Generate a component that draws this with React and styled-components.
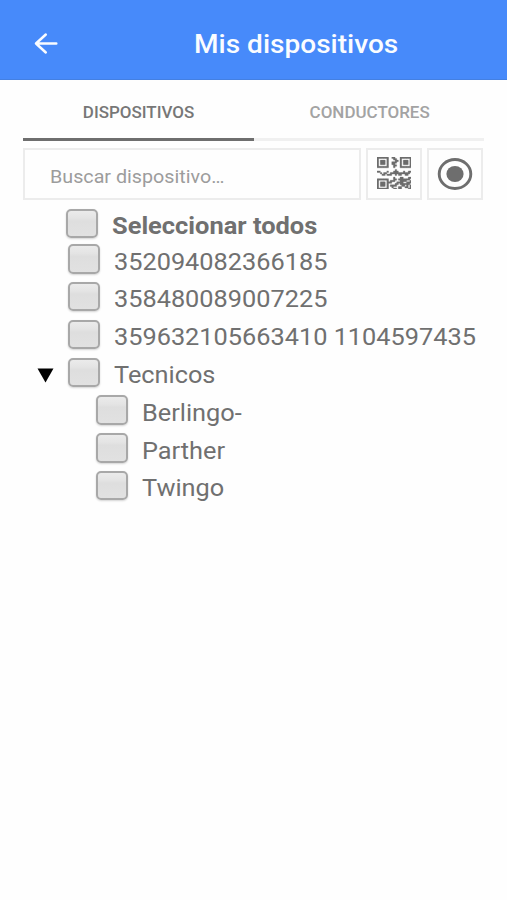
import React from "react";
import styled, { createGlobalStyle } from "styled-components";

const GlobalStyle = createGlobalStyle`
  * { box-sizing: border-box; }
  body { margin: 0; background: #fefefe; font-family: Roboto, "Liberation Sans", sans-serif; }
`;

const Screen = styled.main`
  width: 507px;
  height: 900px;
  overflow: hidden;
  background: #fefefe;
  color: #707070;
`;

const Header = styled.header`
  height: 80px;
  padding: 8px 34px 0;
  display: grid;
  grid-template-columns: 24px 1fr 24px;
  align-items: center;
  background: #478afa;
  border-bottom: 1px solid #4480e2;
  color: #fafcff;
`;

const IconButton = styled.button`
  display: flex;
  padding: 0;
  border: 0;
  background: none;
  color: inherit;
`;

const Title = styled.h1`
  margin: 0;
  padding: 1px 0 0 135.5px;
  font-size: 25.5px;
  line-height: 32px;
  font-weight: 500;
  white-space: nowrap;
`;

const Stretch = styled.span`
  display: inline-block;
  white-space: pre;
  transform: scaleX(${(p) => p.$x || 1.06});
  transform-origin: ${(p) => p.$origin || "left"} center;
`;

const Tabs = styled.nav`
  display: grid;
  grid-template-columns: 231px 230px;
  height: 61px;
  margin: 0 23px 7px;
`;

const Tab = styled.button`
  padding: 8px 0 0 1px;
  border: 0;
  border-bottom: 3px solid ${(p) => (p.$active ? "#6e6e6e" : "#f0f0f0")};
  background: none;
  color: ${(p) => (p.$active ? "#777777" : "#a3a3a3")};
  font: 500 16px/20px Roboto, sans-serif;
`;

const SearchRow = styled.div`
  display: grid;
  grid-template-columns: 338px 56.5px 56px;
  column-gap: 4.75px;
  height: 52px;
  margin: 0 23px;
`;

const SearchInput = styled.div`
  padding: 5px 0 0 25px;
  display: flex;
  align-items: center;
  border: 2px solid #ececec;
  color: #9c9c9c;
  font-size: 18px;
`;

const ToolButton = styled.button`
  display: flex;
  align-items: center;
  justify-content: center;
  padding: ${(p) => (p.$lift ? "0 0 2px 0" : "0")};
  border: 2px solid #ececec;
  background: #fefefe;
  color: #6e6e6e;
`;

const List = styled.ul`
  margin: 7px 0 0;
  padding: 0;
  list-style: none;
`;

const Row = styled.li`
  display: flex;
  align-items: flex-start;
  height: ${(p) => (p.$all ? 35.6 : 37.8)}px;
  padding-left: ${(p) => (p.$all ? 35 : p.$level ? 65 : 36.5)}px;
  font-size: 23.5px;
  line-height: 32px;
  font-weight: ${(p) => (p.$all ? 700 : 400)};
`;

const Toggle = styled.span`
  display: flex;
  width: 31px;
  padding: 12.3px 0 0;
`;

const Checkbox = styled.span`
  flex: none;
  width: 32px;
  height: 29.5px;
  margin: 1.6px 14px 0 0;
  border: 2px solid #a8a8a8;
  border-radius: 5px;
  background: linear-gradient(#ebebeb 0%, #e4e4e4 28%, #dedede 40%, #e1e1e1 100%);
  box-shadow: 0 1px 2px #d4d4d4;
`;

const Label = styled.span`
  padding-top: 3px;
`;

const QR = [
  "111111100110001111111",
  "100000100011001000001",
  "101110100001101011101",
  "101110100111001011101",
  "101110100110001011101",
  "100000100011001000001",
  "111111100010001111111",
  "000000000000000000000",
  "000000000001000000000",
  "110000100011100010011",
  "001011001111111111110",
  "000110111001011001100",
  "000000000000000000000",
  "000000000010001100011",
  "111111100011011111110",
  "100000101110001111001",
  "101110111000111100111",
  "101110100001101111110",
  "101110101111000110101",
  "100000100100011001101",
  "111111100011011000011",
];
const qrPath = QR.flatMap((line, y) =>
  [...line].map((c, x) => (c === "1" ? `M${x} ${y}h1v1h-1z` : ""))
).join("");

const BackIcon = () => (
  <svg width="24" height="24" viewBox="0 0 24 24" fill="none" stroke="currentColor" strokeWidth="2.5" strokeLinecap="round" strokeLinejoin="round">
    <path d="M22.3 11.5H2M11.8 2.5L2 11.5l9.8 9" />
  </svg>
);

const QrIcon = () => (
  <svg width="34.5" height="32.5" viewBox="0 0 21 21" preserveAspectRatio="none">
    <path d={qrPath} fill="currentColor" stroke="currentColor" strokeWidth=".2" />
  </svg>
);

const RecordIcon = () => (
  <svg width="36" height="34" viewBox="0 0 36 34">
    <ellipse cx="18" cy="17" rx="15.8" ry="14.5" fill="none" stroke="currentColor" strokeWidth="2.9" />
    <ellipse cx="18" cy="17" rx="8.6" ry="8.1" fill="currentColor" />
  </svg>
);

const Arrow = () => (
  <svg width="17" height="15" viewBox="0 0 17 15">
    <path d="M.5.5h16L8.5 14.5z" fill="#000" />
  </svg>
);

const devices = [
  { name: "Seleccionar todos", all: true },
  { name: "352094082366185" },
  { name: "358480089007225" },
  { name: "359632105663410 1104597435" },
  { name: "Tecnicos", open: true },
  { name: "Berlingo-", level: 1 },
  { name: "Parther", level: 1 },
  { name: "Twingo", level: 1 },
];

export default function App() {
  return (
    <Screen>
      <GlobalStyle />
      <Header>
        <IconButton aria-label="Volver"><BackIcon /></IconButton>
        <Title><Stretch $x={1.1}>Mis dispositivos</Stretch></Title>
      </Header>
      <Tabs>
        <Tab $active><Stretch $origin="center">DISPOSITIVOS</Stretch></Tab>
        <Tab><Stretch $origin="center">CONDUCTORES</Stretch></Tab>
      </Tabs>
      <SearchRow>
        <SearchInput><Stretch $x={1.095}>Buscar dispositivo…</Stretch></SearchInput>
        <ToolButton $lift aria-label="QR"><QrIcon /></ToolButton>
        <ToolButton aria-label="Seleccionar"><RecordIcon /></ToolButton>
      </SearchRow>
      <List>
        {devices.map((d) => (
          <Row key={d.name} $all={d.all} $level={d.level}>
            <Toggle>{d.open && <Arrow />}</Toggle>
            <Checkbox />
            <Label><Stretch $x={d.all ? 1.082 : 1.077}>{d.name}</Stretch></Label>
          </Row>
        ))}
      </List>
    </Screen>
  );
}
